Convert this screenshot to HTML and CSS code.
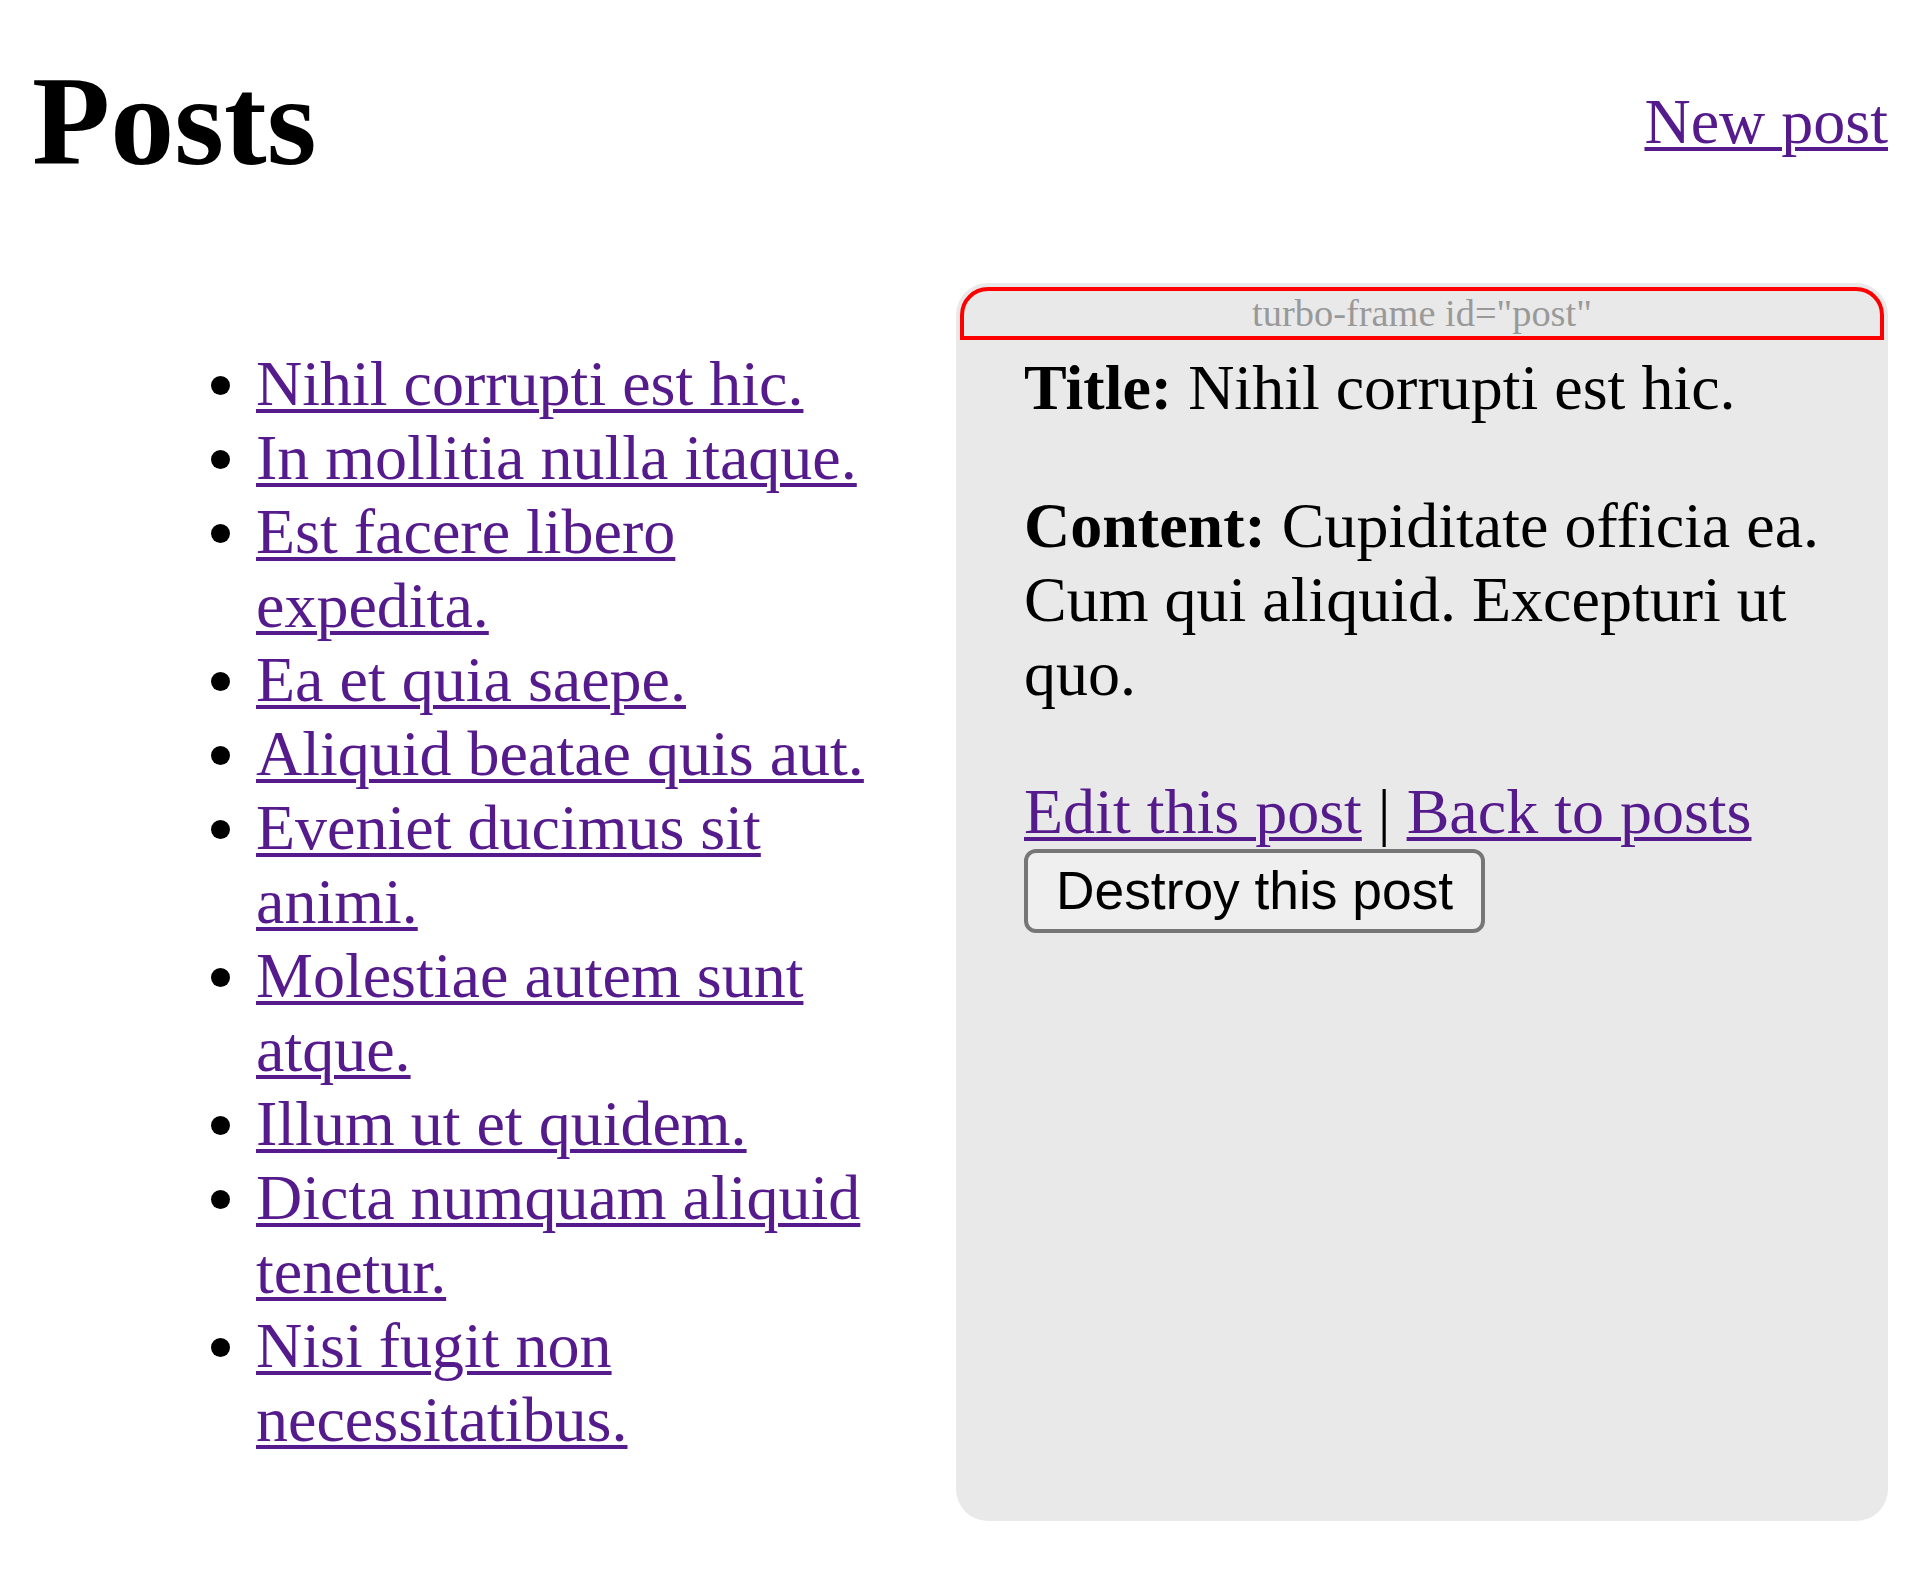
FILE: index.html
```html
<!DOCTYPE html>
<html lang="en">
<head>
<meta charset="utf-8">
<title>Posts</title>
<link rel="stylesheet" href="styles.css">
</head>
<body>
<header class="page-header">
  <h1 class="page-title">Posts</h1>
  <a class="link" href="#">New post</a>
</header>
<main class="layout">
  <div class="posts-col">
    <ul class="post-list">
      <li><a class="link" href="#">Nihil corrupti est hic.</a></li>
      <li><a class="link" href="#">In mollitia nulla itaque.</a></li>
      <li><a class="link" href="#">Est facere libero expedita.</a></li>
      <li><a class="link" href="#">Ea et quia saepe.</a></li>
      <li><a class="link" href="#">Aliquid beatae quis aut.</a></li>
      <li><a class="link" href="#">Eveniet ducimus sit animi.</a></li>
      <li><a class="link" href="#">Molestiae autem sunt atque.</a></li>
      <li><a class="link" href="#">Illum ut et quidem.</a></li>
      <li><a class="link" href="#">Dicta numquam aliquid tenetur.</a></li>
      <li><a class="link" href="#">Nisi fugit non necessitatibus.</a></li>
    </ul>
  </div>
  <section class="frame">
    <div class="frame-label">turbo-frame id="post"</div>
    <div class="post">
      <p class="field"><strong>Title:</strong> Nihil corrupti est hic.</p>
      <p class="field"><strong>Content:</strong> Cupiditate officia ea. Cum qui aliquid. Excepturi ut quo.</p>
      <div class="actions">
        <a class="link" href="#">Edit this post</a> | <a class="link" href="#">Back to posts</a>
      </div>
      <form class="destroy-form">
        <button class="btn" type="button">Destroy this post</button>
      </form>
    </div>
  </section>
</main>
</body>
</html>
```
FILE: styles.css
```css
html, body {
  background: #ffffff;
}

body {
  margin: 32px;
  font-family: "Liberation Serif", "Times New Roman", serif;
  font-size: 64px;
  line-height: 74px;
  color: #000000;
}

.link {
  color: #551a8b;
  text-decoration: underline;
  text-decoration-thickness: 4px;
  text-underline-offset: 4px;
}

.page-header {
  display: flex;
  justify-content: space-between;
  align-items: center;
}

.page-title {
  margin: 16px 0;
  font-size: 128px;
  line-height: 147px;
  font-weight: bold;
}

.layout {
  display: grid;
  grid-template-columns: 924px 1fr;
  margin-top: 72px;
}

.posts-col {
  padding: 0 64px;
}

.post-list {
  margin: 64px 0;
  padding-left: 160px;
}

.frame {
  position: relative;
  background: #e9e9e9;
  border-radius: 32px;
  padding: 4px;
}

.frame-label {
  position: absolute;
  top: 4px;
  left: 4px;
  right: 4px;
  height: 45px;
  border: 4px solid #ff0000;
  border-radius: 28px 28px 0 0;
  text-align: center;
  font-size: 38.4px;
  line-height: 44px;
  color: #999999;
}

.post {
  padding: 0 56px 0 64px;
}

.field {
  margin: 64px 0;
}

.destroy-form {
  margin: 0;
}

.btn {
  font-family: "Liberation Sans", Arial, sans-serif;
  font-size: 53.33px;
  color: #000000;
  background: #efefef;
  border: 4px solid #767676;
  border-radius: 12px;
  padding: 7px 28px 8px;
  margin: 0;
  line-height: normal;
}
```
